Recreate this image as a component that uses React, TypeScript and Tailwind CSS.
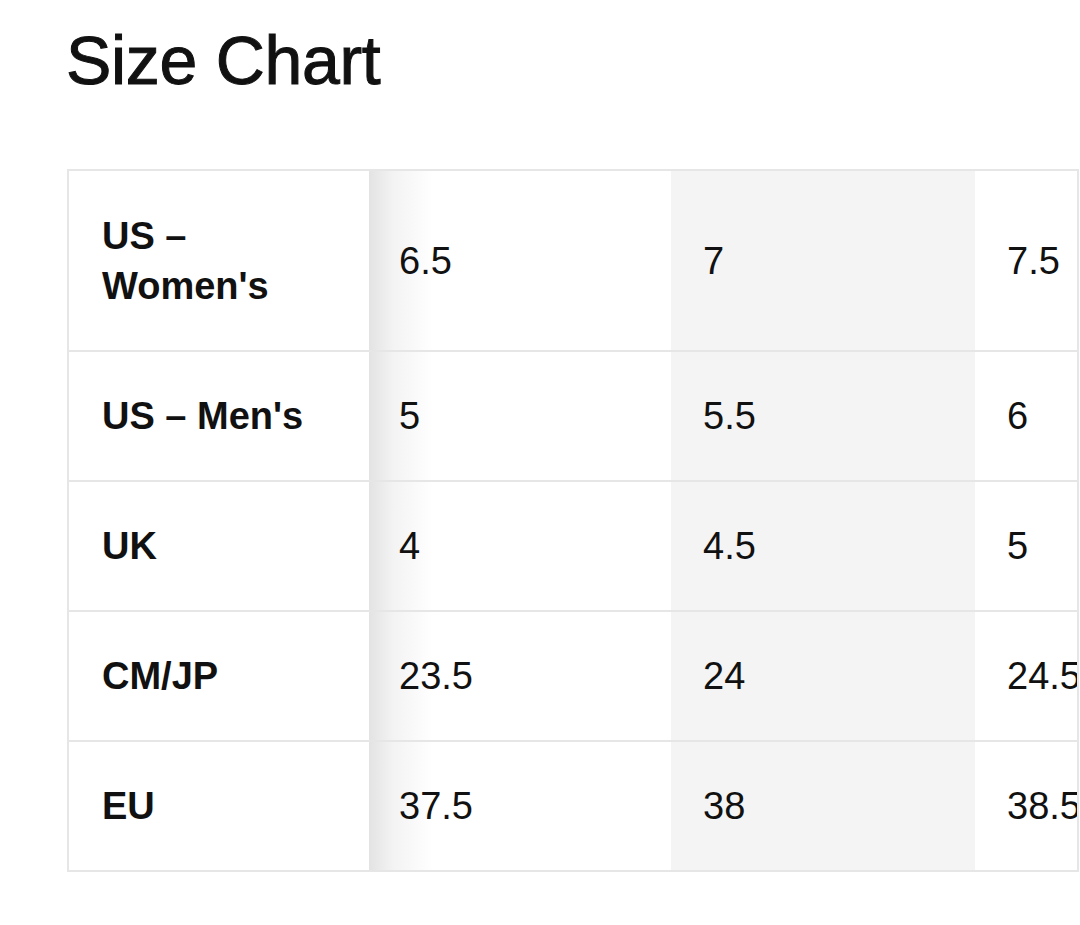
import React from "react";

const rows: { label: React.ReactNode; key: string; values: string[]; first?: boolean }[] = [
  {
    key: "w",
    label: (
      <>
        US –<br />
        Women's
      </>
    ),
    values: ["6.5", "7", "7.5"],
    first: true,
  },
  { key: "m", label: "US – Men's", values: ["5", "5.5", "6"] },
  { key: "uk", label: "UK", values: ["4", "4.5", "5"] },
  { key: "cm", label: "CM/JP", values: ["23.5", "24", "24.5"] },
  { key: "eu", label: "EU", values: ["37.5", "38", "38.5"] },
];

export default function App() {
  return (
    <div
      className="min-h-[925px] w-[1080px] bg-white pl-[67px] text-[#111]"
      style={{ fontFamily: '"Liberation Sans", Arial, Helvetica, sans-serif' }}
    >
      <h1 className="ml-[-1px] pt-[26px] text-[68px] leading-none font-normal tracking-[-0.3px] [-webkit-text-stroke:1px_#111]">
        Size Chart
      </h1>
      <div className="mt-[75px] w-[1012px] overflow-hidden border-2 border-[#e6e6e6]">
        <div className="w-[1214px]">
          {rows.map((r, i) => (
            <div
              key={r.key}
              className={`flex text-[38px] leading-[50px] ${i > 0 ? "border-t-2 border-[#e6e6e6]" : ""}`}
            >
              <div
                className={`flex w-[300px] shrink-0 items-center bg-white pl-[33px] font-bold whitespace-nowrap ${
                  r.first ? "pt-[40px] pb-[39px]" : "py-[39px]"
                }`}
              >
                <span>{r.label}</span>
              </div>
              <div className="flex w-[302px] shrink-0 items-center bg-[linear-gradient(to_right,#e3e3e3_0px,#f3f3f3_24px,#ffffff_64px)] pl-[30px]">
                {r.values[0]}
              </div>
              <div className="flex w-[304px] shrink-0 items-center bg-[#f4f4f4] pl-[32px]">
                {r.values[1]}
              </div>
              <div className="flex w-[304px] shrink-0 items-center bg-white pl-[32px]">
                {r.values[2]}
              </div>
            </div>
          ))}
        </div>
      </div>
    </div>
  );
}
